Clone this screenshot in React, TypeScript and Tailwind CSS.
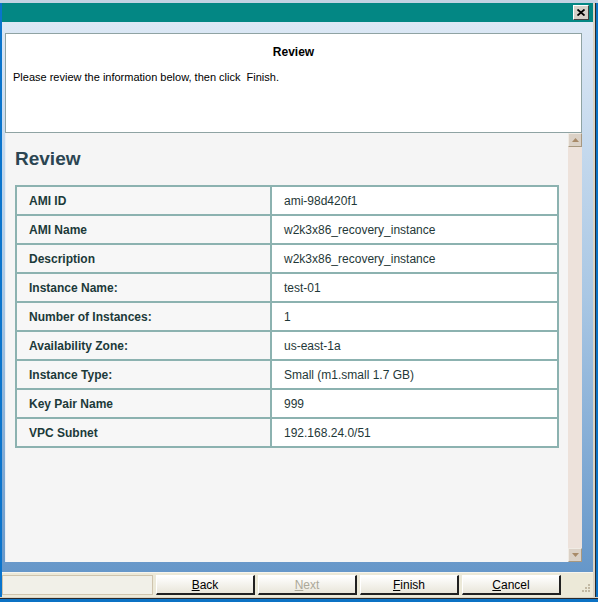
// Wizard "Review" step — static recreation of the classic Windows dialog.

const rows: [string, string][] = [
  ['AMI ID', 'ami-98d420f1'],
  ['AMI Name', 'w2k3x86_recovery_instance'],
  ['Description', 'w2k3x86_recovery_instance'],
  ['Instance Name:', 'test-01'],
  ['Number of Instances:', '1'],
  ['Availability Zone:', 'us-east-1a'],
  ['Instance Type:', 'Small (m1.small 1.7 GB)'],
  ['Key Pair Name', '999'],
  ['VPC Subnet', '192.168.24.0/51'],
]

function WizardButton({ label, hot, disabled }: { label: string; hot: string; disabled?: boolean }) {
  const rest = label.slice(1)
  return (
    <button
      className={`h-[20px] w-[99px] border-t border-l border-white border-r-2 border-b-2 border-r-[#202020] border-b-[#202020] bg-gradient-to-b from-white to-[#e9e6da] text-[12px] leading-none ${
        disabled ? 'text-[#aca899]' : 'text-black'
      }`}
    >
      <span className="underline">{hot}</span>
      {rest}
    </button>
  )
}

function ScrollArrow({ up }: { up?: boolean }) {
  return (
    <div className="flex h-[14px] w-[14px] items-center justify-center border border-t-[#f0ebe4] border-l-[#f0ebe4] border-r-[#a8987f] border-b-[#a8987f] bg-[#dbd1c6]">
      <svg width="7" height="4" viewBox="0 0 7 4">
        <path d={up ? 'M0 4 L3.5 0 L7 4 Z' : 'M0 0 L3.5 4 L7 0 Z'} fill="#a88a68" />
      </svg>
    </div>
  )
}

export default function App() {
  return (
    <div
      className="flex h-[602px] w-[598px] flex-col overflow-hidden bg-[#0c72c4]"
      style={{ fontFamily: '"Liberation Sans", Arial, sans-serif' }}
    >
      <div className="h-[3px] bg-[#c3d3e3]" />
      <div className="flex min-h-0 flex-1">
        <div className="w-[2px] bg-[#0a74cc]" />

        <div className="flex min-w-0 flex-1 flex-col">
          {/* title bar */}
          <div className="flex h-[19px] items-center justify-end bg-[#038784] pr-[4px]">
            <div className="flex h-[15px] w-[16px] items-center justify-center border border-t-white border-l-white border-r-[#404040] border-b-[#404040] bg-[#d4d0c8]">
              <svg width="8" height="7" viewBox="0 0 8 7">
                <path d="M0.5 0.5 L7.5 6.5 M7.5 0.5 L0.5 6.5" stroke="#000" strokeWidth="1.8" />
              </svg>
            </div>
          </div>

          {/* body */}
          <div className="flex flex-1 flex-col bg-gradient-to-b from-[#dce8f5] via-[#a9c7e4] to-[#6697c9] pt-[11px] pl-[3px] pr-[11px] pb-[10px]">
            <div className="h-[100px] border border-[#8fa3a3] bg-white">
              <p className="mt-[10px] text-center text-[12px] font-bold leading-[16px] text-black">Review</p>
              <p className="mt-[9px] pl-[7px] text-[11px] leading-[16px] text-black">
                Please review the information below, then click&nbsp; Finish.
              </p>
            </div>

            <div className="flex min-h-0 flex-1 border-l border-[#e8eef4]">
              <div className="flex-1 bg-[#f5f5f5] pl-[9px] pt-[15px]">
                <h1 className="text-[19px] font-bold leading-[22px] text-[#2b4552]">Review</h1>
                <table className="mt-[15px] w-[544px] border-collapse border-2 border-[#8cb2b0]">
                  <tbody>
                    {rows.map(([k, v]) => (
                      <tr key={k} className="h-[29px]">
                        <td className="w-[255px] border-2 border-[#8cb2b0] bg-[#f7f7f7] pl-[12px] text-[12px] font-bold text-[#1c3a3a]">
                          {k}
                        </td>
                        <td className="border-2 border-[#8cb2b0] bg-white pl-[12px] text-[12px] text-[#1f3838]">{v}</td>
                      </tr>
                    ))}
                  </tbody>
                </table>
              </div>
              <div className="flex w-[14px] flex-col justify-between bg-[#ede2db]">
                <ScrollArrow up />
                <ScrollArrow />
              </div>
            </div>
          </div>

          {/* button bar */}
          <div className="flex h-[25px] items-center gap-[3px] border-t border-[#f7f5ee] bg-[#ece9d8]">
            <div className="h-[20px] w-[151px] border border-[#cfc4ad] bg-[#f1f0e8]" />
            <WizardButton label="Back" hot="B" />
            <WizardButton label="Next" hot="N" disabled />
            <WizardButton label="Finish" hot="F" />
            <WizardButton label="Cancel" hot="C" />
            <div className="ml-auto mr-[3px] mt-[6px] grid grid-cols-3 gap-[1px]">
              {[0, 0, 1, 0, 1, 1, 1, 1, 1].map((on, i) => (
                <span key={i} className={`h-[2px] w-[2px] ${on ? 'bg-[#c2b9a3]' : ''}`} />
              ))}
            </div>
          </div>
        </div>

        <div className="flex w-[5px]">
          <div className="w-[2px] bg-[#d9d3c5]" />
          <div className="w-[1px] bg-[#2a2a2a]" />
          <div className="w-[2px] bg-[#0c72c4]" />
        </div>
      </div>
      <div className="h-[1px] bg-[#d9d3c5]" />
      <div className="h-[1px] bg-[#2a2a2a]" />
      <div className="h-[3px] bg-[#0c72c4]" />
    </div>
  )
}
